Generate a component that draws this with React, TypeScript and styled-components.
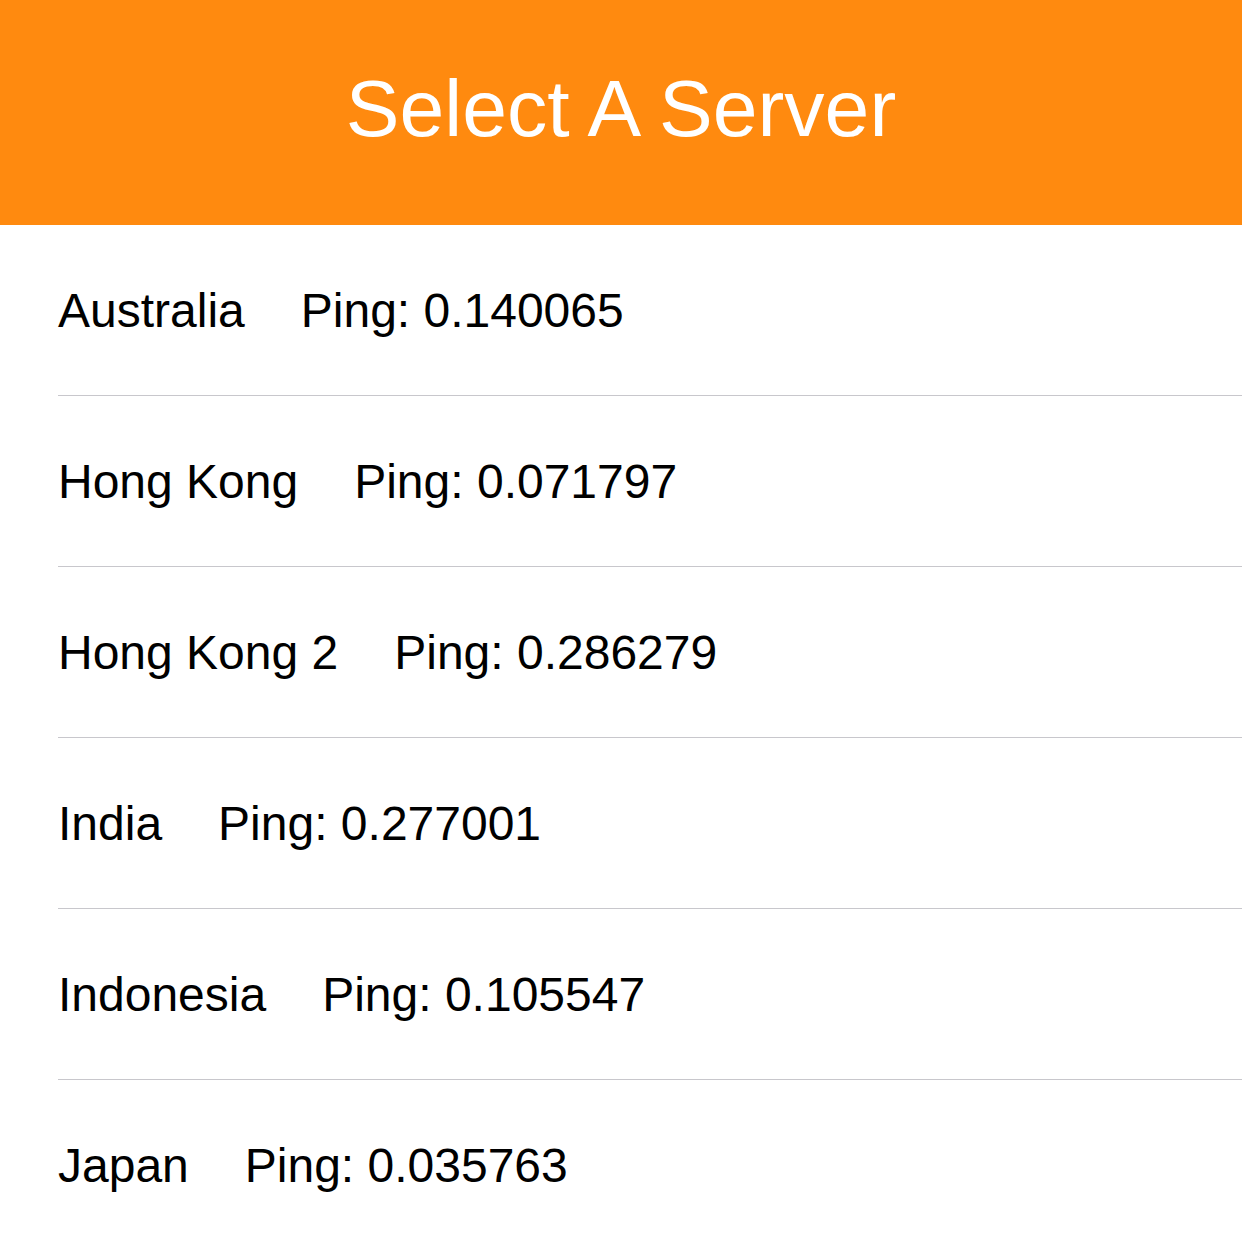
import React from 'react';
import styled, { createGlobalStyle } from 'styled-components';

const GlobalStyle = createGlobalStyle`
  html, body {
    margin: 0;
    padding: 0;
    background: #fff;
    font-family: "Liberation Sans", Arial, Helvetica, sans-serif;
  }
`;

const Screen = styled.div`
  width: 1242px;
  min-height: 1242px;
  background: #fff;
  overflow: hidden;
`;

const Header = styled.header`
  height: 225px;
  background: #ff8a0f;
  display: flex;
  align-items: center;
  justify-content: center;
`;

const Title = styled.h1`
  margin: 0 0 8px;
  color: #fff;
  font-size: 80.5px;
  font-weight: 400;
`;

const List = styled.ul`
  list-style: none;
  margin: 0;
  padding: 0 0 0 58px;
`;

const Row = styled.li`
  height: 170px;
  display: flex;
  align-items: center;
  gap: 56px;
  border-bottom: 1px solid #c8c7cc;
  font-size: 48px;
  color: #000;
`;

const servers = [
  { name: 'Australia', ping: '0.140065' },
  { name: 'Hong Kong', ping: '0.071797' },
  { name: 'Hong Kong 2', ping: '0.286279' },
  { name: 'India', ping: '0.277001' },
  { name: 'Indonesia', ping: '0.105547' },
  { name: 'Japan', ping: '0.035763' },
];

const App = () => {
  return (
    <Screen>
      <GlobalStyle />
      <Header>
        <Title>Select A Server</Title>
      </Header>
      <List>
        {servers.map((s) => (
          <Row key={s.name}>
            <span>{s.name}</span>
            <span>Ping: {s.ping}</span>
          </Row>
        ))}
      </List>
    </Screen>
  );
};

export default App;
